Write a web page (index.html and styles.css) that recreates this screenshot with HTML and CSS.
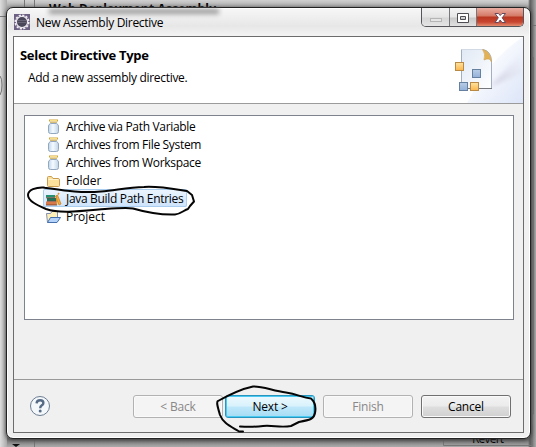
FILE: index.html
```html
<!DOCTYPE html>
<html lang="en">
<head>
<meta charset="utf-8">
<title>New Assembly Directive</title>
<link rel="stylesheet" href="styles.css">
</head>
<body>
<div class="desktop">
  <svg class="behind" width="536" height="447">
    <path d="M0 16.500H24M24.500 0V16M34.500 0V16M0 76Q2 78 2 85T0 95M34.500 438V447M530 25.500H536M530 57.500H533.500V414H530M443.500 438V445.500H532.500V425H530" fill="none" stroke="#777"/>
    <path d="M12 444H20L16 447Z" fill="#111"/>
    <text class="behind-title" x="49" y="12.500" textLength="167">Web Deployment Assembly</text>
    <text class="behind-button" x="472" y="443" textLength="32">Revert</text>
  </svg>
  <main class="dialog">
    <header class="titlebar">
      <svg class="app-icon" width="16" height="16" viewBox="0 0 16 16">
        <rect width="16" height="16" fill="#6d6183"/>
        <circle cx="8" cy="8" r="6.800" fill="none" stroke="#f1eef4" stroke-width="1.600" stroke-dasharray="2.200 1.360"/>
        <circle cx="8" cy="8" r="5.600" fill="#4a4659" stroke="#e9e6ee" stroke-width="1.200"/>
        <path d="M3.500 6.500H12.500M3.500 8.500H12.500" stroke="#716c80" stroke-width=".8"/>
      </svg>
      <h1 class="title">New Assembly Directive</h1>
      <div class="controls">
        <span class="control minimize"><svg width="27" height="18"><rect x="8.500" y="10.500" width="11" height="3" fill="#e5e5e5" stroke="#b5b5b5"/></svg></span>
        <span class="control maximize"><svg width="26" height="18"><path d="M7.500 5.500H18.500V14.500H7.500ZM10.500 8.500H15.500V11.500H10.500Z" fill="#fff" fill-rule="evenodd" stroke="#4d4d53"/></svg></span>
        <span class="control close"><svg width="46" height="18"><path d="M18 5.500H21.500L23.200 7.500L25 5.500H28.500L25.200 9.800L28.500 14.500H25L23.200 12L21.500 14.500H18L21.300 9.800Z" fill="#fff" stroke="#66495a"/></svg></span>
      </div>
    </header>
    <div class="client">
      <section class="banner">
        <div class="banner-text">
          <h2>Select Directive Type</h2>
          <p>Add a new assembly directive.</p>
        </div>
        <svg class="banner-art" width="76" height="66" viewBox="0 0 76 66">
          <defs>
            <linearGradient id="sky" x1="0" x2="1" y1="0" y2="1"><stop offset=".25" stop-color="#fff"/><stop offset="1" stop-color="#dce5f8"/></linearGradient>
            <linearGradient id="beam" x1="0" x2="1" y1="1" y2="0"><stop offset="0" stop-color="#cbc8db"/><stop offset="1" stop-color="#eaf0fc" stop-opacity=".2"/></linearGradient>
            <linearGradient id="sheet" x1="0" x2="1" y1="0" y2="1"><stop offset="0" stop-color="#e0e9f5"/><stop offset="1" stop-color="#fff"/></linearGradient>
            <linearGradient id="gold" y2="1" x2="0"><stop offset="0" stop-color="#ffe3a0"/><stop offset="1" stop-color="#fbb64c"/></linearGradient>
            <linearGradient id="blue" y2="1" x2="0"><stop offset="0" stop-color="#b9cde6"/><stop offset="1" stop-color="#93b0d8"/></linearGradient>
            <filter id="soft"><feGaussianBlur stdDeviation="2"/></filter>
          </defs>
          <path d="M20 66Q44 20 76 0V66Z" fill="url(#sky)"/>
          <path d="M44 49L76 14V36Z" fill="url(#beam)" filter="url(#soft)"/>
          <path d="M14.500 12.500H36Q44 14 44.500 24V51.500H14.500Z" fill="url(#sheet)" stroke="#a3afc0"/>
          <path d="M14.500 12.500H36" stroke="#d2dae5"/>
          <path d="M15 51.500H45" stroke="#77777d"/>
          <path d="M35.500 12.500Q39 17 37 23Q43 20 44.500 25Q43.500 14 35.500 12.500Z" fill="#e4b154" stroke="#cfa352" stroke-width=".6"/>
          <rect x="8.500" y="25.500" width="8" height="8" fill="url(#gold)" stroke="#b98a46"/>
          <rect x="25.500" y="32.500" width="8" height="8" fill="url(#blue)" stroke="#66809f"/>
          <rect x="12.500" y="45.500" width="8" height="8" fill="url(#blue)" stroke="#66809f"/>
          <rect x="23.500" y="45.500" width="8" height="8" fill="url(#gold)" stroke="#b98a46"/>
        </svg>
      </section>
      <section class="content">
        <svg class="symbols" width="0" height="0">
          <defs>
            <linearGradient id="glass" x1="0" x2="1"><stop offset="0" stop-color="#bfd6eb"/><stop offset=".45" stop-color="#f5faff"/><stop offset="1" stop-color="#c0d4e7"/></linearGradient>
          </defs>
          <symbol id="jar" viewBox="0 0 16 16"><path d="M4.500 4.500Q2.500 5.500 2.500 7V12.500Q2.500 14.500 4.500 14.500H10.500Q12.500 14.500 12.500 12.500V7Q12.500 5.500 10.500 4.500Z" fill="url(#glass)" stroke="#93a8bf"/><path d="M3 1.500H12" stroke="#d0a43d" stroke-width="2"/><path d="M4 1.500H11" stroke="#fff0a0" stroke-width=".8"/><path d="M4 3.500H11" stroke="#d3bc78"/></symbol>
        </svg>
        <ul class="list">
          <li><svg width="16" height="16"><use href="#jar"/></svg><span class="item l1">Archive via Path Variable</span></li>
          <li><svg width="16" height="16"><use href="#jar"/></svg><span class="item l2">Archives from File System</span></li>
          <li><svg width="16" height="16"><use href="#jar"/></svg><span class="item l3">Archives from Workspace</span></li>
          <li><svg width="16" height="16"><path d="M1.500 12.500V4.500Q1.500 3.500 2.500 3.500H5.500L7 5.500H12Q13.500 5.500 13.500 7V12.500Q13.500 13.500 12.500 13.500H2.500Q1.500 13.500 1.500 12.500Z" fill="#fbe19b" stroke="#c99c50"/><path d="M2.500 6.500H12.500" stroke="#fff4cd"/></svg><span class="item l4">Folder</span></li>
          <li class="selected"><svg width="16" height="16"><path d="M9.500 5L11.500 4L15 13L13 14Z" fill="#f4b13e" stroke="#c87819" stroke-width=".7"/><path d="M10.500 14V5M12 3.500L13 2" stroke="#e0902c" stroke-width="1.400"/><path d="M0 4H9V6.500H0Z" fill="#249071"/><path d="M1 7H10V10H1Z" fill="#23745c"/><path d="M0 10.500H10V14H0Z" fill="#d87949"/><path d="M0 6.800H9M1 10.200H10M0 14H11" stroke="#743d29" stroke-width=".8"/></svg><span class="item l5">Java Build Path Entries</span></li>
          <li><svg width="16" height="16"><path d="M1.500 13.500L.5 4.500H4.500L6 2.500H11.500V8" fill="#fff0b8" stroke="#8090b0"/><path d="M1.500 13.500L4.500 8.500H14.500L11 13.500Z" fill="#b5d2f8" stroke="#4570ac"/></svg><span class="item l6">Project</span></li>
        </ul>
      </section>
      <footer class="actions">
        <svg class="help" width="22" height="22" viewBox="0 0 22 22"><circle cx="11" cy="11" r="9.500" fill="#f4f8fb" stroke="#6c7d92"/><path d="M7.600 8.400Q7.700 5.200 11.200 5.200Q14.400 5.200 14.400 7.900Q14.400 9.400 12.600 10.600Q11.200 11.500 11.200 13.200" fill="none" stroke="#566b86" stroke-width="2.400"/><circle cx="11.200" cy="16" r="1.500" fill="#566b86"/></svg>
        <button class="button disabled back">&lt; Back</button>
        <button class="button default">Next &gt;</button>
        <button class="button disabled finish">Finish</button>
        <button class="button cancel">Cancel</button>
      </footer>
    </div>
  </main>
  <svg class="marks" width="536" height="447" fill="none" stroke="#050505" stroke-width="2" stroke-linecap="round" stroke-linejoin="round">
    <path d="M44 187.500C36 187 28 190 28 195C28 201 37 205 46 209C60 214 82 211 105 209C119 208 128 207.500 133 208.500C145 212 161 215 175 214.500C181 214 184 210 188 209L190 206L194 201.500L192 195L187 191C174 189 158 186 144 187C128 187.500 117 190 101 191.500C79 193.500 61 190 43 187.500"/>
    <path d="M243 431.500H239C230 426 223 423 220 415C218 408 216 402 218 401C227 396 241 389 253 386.500C263 386 273 391 286 392.500C298 394 302 398 311 398.500C315 402 316 408 315 413C314 419 310 420 299 422L291 426C280 428 273 425 263 426C255 427 248 427 240 426.500"/>
  </svg>
</div>
</body>
</html>
```
FILE: styles.css
```css
* { box-sizing: border-box; }
body { margin: 0; font: 12px "Open Sans", "Noto Sans", sans-serif; color: #000; }
h1, h2, p, ul { margin: 0; padding: 0; }
svg { display: block; flex: none; }
.desktop {
  position: relative;
  width: 536px;
  height: 447px;
  padding: 7px 6px 8px;
  overflow: hidden;
  background: linear-gradient(90deg, #ddd, #aaa 7px, transparent 7px), linear-gradient(90deg, transparent 528px, #5d5d5d 530px, #a9a9a9), linear-gradient(#d0d0d0, #aaa 7px, #bbb 430px, #747474 439px, #aaa);
}
.behind { position: absolute; inset: 0; }
.behind-title { font-size: 12px; font-weight: 700; }
.behind-button { font-size: 12px; }
.dialog {
  position: relative;
  width: 525px;
  height: 432px;
  padding: 0 6px 6px;
  border: 1px solid #222;
  border-radius: 7px;
  background: linear-gradient(#f7f7f7, #e7e7e7 18px, #f3f3f3 28px, #eee);
  box-shadow: inset 0 0 0 1px #fff, 0 1px 4px #333;
}
.titlebar { display: flex; height: 28px; align-items: flex-start; }
.dialog::before {
  content: "";
  position: absolute;
  top: 1px;
  left: 42px;
  width: 170px;
  height: 5px;
  background: #777;
  opacity: .75;
  filter: blur(2.5px);
}
.app-icon { margin: 6px 0 0 1px; }
.title { margin: 6px 0 0 6px; font-size: 12px; line-height: 18px; font-weight: 400; letter-spacing: -.3px; white-space: nowrap; }
.controls { display: flex; height: 19px; margin: 0 0 0 auto; border: 1px solid #55555a; border-top: 0; border-radius: 0 0 5px 5px; overflow: hidden; }
.control { height: 18px; background: linear-gradient(#f4f4f4, #e6e6e6 9px, #c8c8c8 10px, #e1e1e1); }
.minimize, .maximize { border-right: 1px solid #77777b; }
.minimize { background: linear-gradient(#f2f2f2, #e4e4e4 9px, #d6d6d6 10px, #e5e5e5); }
.close { background: linear-gradient(#e9aea2, #d57a66 8px, #b93720 9px, #c84530 14px, #e38d70); }
.client { height: 397px; border: 1px solid #6c6c6c; background: #f0f0f0; }
.banner { display: flex; justify-content: space-between; height: 67px; background: #fff; border-bottom: 1px solid #9b9b9b; }
.banner-text { padding: 8px 0 0 6px; white-space: nowrap; }
h2 { font-size: 13px; line-height: 20px; letter-spacing: -.3px; }
.banner-text p { margin: 4px 0 0 8px; line-height: 18px; letter-spacing: -.3px; }
.content { height: 276px; padding: 11px 9px 0 10px; border-bottom: 1px solid #999; }
.symbols { position: absolute; }
.list { height: 205px; padding: 1px 0 0 18px; border: 1px solid #7e828c; background: #fff; list-style: none; }
.list li { display: flex; width: 144px; height: 18px; padding: 2px 0 0 3px; align-items: center; }
.item { margin-left: 4px; line-height: 18px; white-space: nowrap; }
.list .selected { box-shadow: inset 0 0 0 1px #a9cdee; border-radius: 2px; background: linear-gradient(#edf5fe, #cce2fa); }
.actions { display: flex; padding: 15px 12px 0 15px; }
.button { width: 90px; height: 23px; padding: 0; border: 1px solid #707070; border-radius: 3px; background: linear-gradient(#f3f3f3, #ebebeb 10px, #dedede 11px, #d0d0d0); box-shadow: inset 0 0 0 1px #fafafa; font: 12px/19px "Open Sans", "Noto Sans", sans-serif; letter-spacing: -.2px; color: #000; }
.back { margin-left: 82px; }
.default { margin-left: 2px; border-color: #2795bd; background: linear-gradient(#edf9fe, #d9f2fc 10px, #bfe7fa 11px, #a5dcf4); box-shadow: inset 0 0 0 1px #48caf2; }
.finish { margin-left: 8px; }
.cancel { margin-left: 8px; }
.disabled { color: #8a8787; background: #f4f4f4; border-color: #b2b2b2; }
.marks { position: absolute; inset: 0; }
.l1, .l2, .l3, .l5 { letter-spacing: -.32px; }
```
